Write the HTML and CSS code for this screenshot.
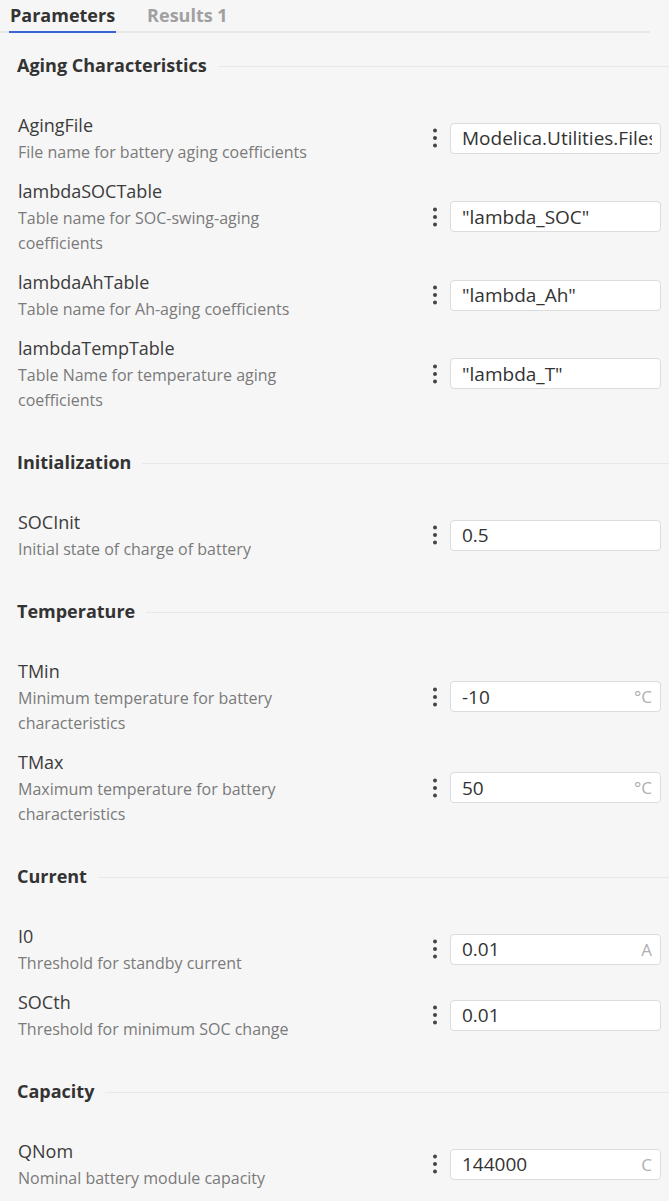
FILE: index.html
```html
<!DOCTYPE html>
<html lang="en">
<head>
    <meta charset="UTF-8">
    <meta name="viewport" content="width=device-width, initial-scale=1.0">
    <title>Parameters</title>
    <link rel="stylesheet" href="styles.css">
</head>
<body>
    <div class="tabs">
        <div class="tab active">Parameters</div>
        <div class="tab">Results 1</div>
    </div>

    <div class="panel">
        <!-- Aging -->
        <section class="group">
            <h2 class="group-title">Aging Characteristics</h2>
            <div class="param">
                <div class="param-label">
                    <div class="param-name">AgingFile</div>
                    <div class="param-desc">File name for battery aging coefficients</div>
                </div>
                <button class="kebab"><svg width="8" height="20" viewBox="0 0 8 20"><circle cx="4" cy="2.5" r="2"/><circle cx="4" cy="10" r="2"/><circle cx="4" cy="17.5" r="2"/></svg></button>
                <div class="field"><input class="field-input" value="Modelica.Utilities.Files.loadResource(&quot;modelica://Battery/Resources/aging.mat&quot;)"></div>
            </div>
            <div class="param">
                <div class="param-label">
                    <div class="param-name">lambdaSOCTable</div>
                    <div class="param-desc">Table name for SOC-swing-aging coefficients</div>
                </div>
                <button class="kebab"><svg width="8" height="20" viewBox="0 0 8 20"><circle cx="4" cy="2.5" r="2"/><circle cx="4" cy="10" r="2"/><circle cx="4" cy="17.5" r="2"/></svg></button>
                <div class="field"><input class="field-input" value="&quot;lambda_SOC&quot;"></div>
            </div>
            <div class="param">
                <div class="param-label">
                    <div class="param-name">lambdaAhTable</div>
                    <div class="param-desc">Table name for Ah-aging coefficients</div>
                </div>
                <button class="kebab"><svg width="8" height="20" viewBox="0 0 8 20"><circle cx="4" cy="2.5" r="2"/><circle cx="4" cy="10" r="2"/><circle cx="4" cy="17.5" r="2"/></svg></button>
                <div class="field"><input class="field-input" value="&quot;lambda_Ah&quot;"></div>
            </div>
            <div class="param">
                <div class="param-label">
                    <div class="param-name">lambdaTempTable</div>
                    <div class="param-desc">Table Name for temperature aging coefficients</div>
                </div>
                <button class="kebab"><svg width="8" height="20" viewBox="0 0 8 20"><circle cx="4" cy="2.5" r="2"/><circle cx="4" cy="10" r="2"/><circle cx="4" cy="17.5" r="2"/></svg></button>
                <div class="field"><input class="field-input" value="&quot;lambda_T&quot;"></div>
            </div>
        </section>

        <!-- Initialization -->
        <section class="group">
            <h2 class="group-title">Initialization</h2>
            <div class="param">
                <div class="param-label">
                    <div class="param-name">SOCInit</div>
                    <div class="param-desc">Initial state of charge of battery</div>
                </div>
                <button class="kebab"><svg width="8" height="20" viewBox="0 0 8 20"><circle cx="4" cy="2.5" r="2"/><circle cx="4" cy="10" r="2"/><circle cx="4" cy="17.5" r="2"/></svg></button>
                <div class="field"><input class="field-input" value="0.5"></div>
            </div>
        </section>

        <!-- Temperature -->
        <section class="group">
            <h2 class="group-title">Temperature</h2>
            <div class="param">
                <div class="param-label">
                    <div class="param-name">TMin</div>
                    <div class="param-desc">Minimum temperature for battery characteristics</div>
                </div>
                <button class="kebab"><svg width="8" height="20" viewBox="0 0 8 20"><circle cx="4" cy="2.5" r="2"/><circle cx="4" cy="10" r="2"/><circle cx="4" cy="17.5" r="2"/></svg></button>
                <div class="field"><input class="field-input" value="-10"><span class="unit">°C</span></div>
            </div>
            <div class="param">
                <div class="param-label">
                    <div class="param-name">TMax</div>
                    <div class="param-desc">Maximum temperature for battery characteristics</div>
                </div>
                <button class="kebab"><svg width="8" height="20" viewBox="0 0 8 20"><circle cx="4" cy="2.5" r="2"/><circle cx="4" cy="10" r="2"/><circle cx="4" cy="17.5" r="2"/></svg></button>
                <div class="field"><input class="field-input" value="50"><span class="unit">°C</span></div>
            </div>
        </section>

        <!-- Current -->
        <section class="group">
            <h2 class="group-title">Current</h2>
            <div class="param">
                <div class="param-label">
                    <div class="param-name">I0</div>
                    <div class="param-desc">Threshold for standby current</div>
                </div>
                <button class="kebab"><svg width="8" height="20" viewBox="0 0 8 20"><circle cx="4" cy="2.5" r="2"/><circle cx="4" cy="10" r="2"/><circle cx="4" cy="17.5" r="2"/></svg></button>
                <div class="field"><input class="field-input" value="0.01"><span class="unit">A</span></div>
            </div>
            <div class="param">
                <div class="param-label">
                    <div class="param-name">SOCth</div>
                    <div class="param-desc">Threshold for minimum SOC change</div>
                </div>
                <button class="kebab"><svg width="8" height="20" viewBox="0 0 8 20"><circle cx="4" cy="2.5" r="2"/><circle cx="4" cy="10" r="2"/><circle cx="4" cy="17.5" r="2"/></svg></button>
                <div class="field"><input class="field-input" value="0.01"></div>
            </div>
        </section>

        <!-- Capacity -->
        <section class="group">
            <h2 class="group-title">Capacity</h2>
            <div class="param">
                <div class="param-label">
                    <div class="param-name">QNom</div>
                    <div class="param-desc">Nominal battery module capacity</div>
                </div>
                <button class="kebab"><svg width="8" height="20" viewBox="0 0 8 20"><circle cx="4" cy="2.5" r="2"/><circle cx="4" cy="10" r="2"/><circle cx="4" cy="17.5" r="2"/></svg></button>
                <div class="field"><input class="field-input" value="144000"><span class="unit">C</span></div>
            </div>
        </section>
    </div>
</body>
</html>
```

FILE: styles.css
```css
* {
    margin: 0;
    padding: 0;
    box-sizing: border-box;
}

body {
    background-color: #f6f6f6;
    color: #3a3a3a;
    font-family: 'Open Sans', 'Liberation Sans', sans-serif;
    overflow: hidden;
}

/* Tabs */
.tabs {
    display: flex;
    gap: 30px;
    padding-left: 9px;
    margin-right: 19px;
    border-bottom: 2px solid #e8e8e8;
}

.tab {
    font-size: 18px;
    font-weight: bold;
    line-height: 31px;
    color: #a0a0a0;
    padding: 0 1px;
    border-bottom: 2px solid transparent;
    margin-bottom: -2px;
}

.tab.active {
    color: #333;
    border-bottom-color: #3a63d6;
}

/* Panel */
.panel {
    padding: 20px 8px 0 18px;
}

.group + .group {
    margin-top: 31px;
}

.group-title {
    display: flex;
    align-items: center;
    gap: 11px;
    margin: 0 -8px 28px -1px;
    font-size: 18px;
    line-height: 24px;
    font-weight: bold;
    color: #333;
}

.group-title::after {
    content: '';
    flex: 1;
    height: 1px;
    margin-top: 3px;
    background-color: #e8e8e8;
}

/* Parameter rows */
.param {
    display: grid;
    grid-template-columns: 1fr 8px 211px;
    column-gap: 11px;
    align-items: center;
    padding: 6px 0;
}

.param-name {
    font-size: 18px;
    line-height: 29px;
    color: #3c3c3c;
}

.param-desc {
    max-width: 315px;
    font-size: 16px;
    line-height: 25px;
    color: #7a7a7a;
}

.kebab {
    display: flex;
    background: none;
    border: none;
    fill: #444;
    cursor: pointer;
}

.field {
    position: relative;
    height: 31px;
    background-color: #fff;
    border: 1px solid #dcdcdc;
    border-radius: 4px;
}

.field-input {
    width: 100%;
    height: 100%;
    border: none;
    background: transparent;
    padding: 0 8px 0 11px;
    font-family: 'Open Sans', 'Liberation Sans', sans-serif;
    font-size: 19px;
    color: #333;
    outline: none;
}

.unit {
    position: absolute;
    right: 8px;
    top: 0;
    line-height: 29px;
    font-size: 17px;
    color: #b0b0b0;
}
```
